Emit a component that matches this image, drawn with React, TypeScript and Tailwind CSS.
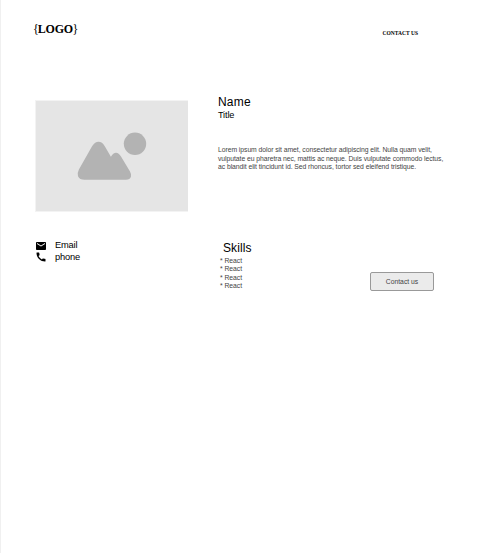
import React from 'react';

const skills = ['React', 'React', 'React', 'React'];

function Placeholder() {
  return (
    <svg className="block h-[112px] w-[153px]" viewBox="35 100 153 112">
      <rect x="35" y="100" width="153" height="112" fill="#f3f3f3" />
      <rect x="36" y="101" width="152" height="110" fill="#e5e5e5" />
      <path
        d="M78.9 169.5L92.2 146.1Q95 141.8 98.5 141.8Q102.2 141.8 104.8 146.2L110.9 156.8Q113.2 152.8 116 152.8Q118.8 152.8 121 156.6L130 171.6Q131.6 174.6 131 176.6Q130 179.8 126 179.8H84.5Q79.5 179.8 78 176.2Q77 173.2 78.9 169.5Z"
        fill="#b3b3b3"
      />
      <circle cx="135" cy="143.8" r="11.2" fill="#b3b3b3" />
    </svg>
  );
}

function MailIcon() {
  return (
    <svg className="block size-[12px]" viewBox="0 0 24 24">
      <path d="M20 4H4c-1.1 0-2 .9-2 2v12c0 1.1.9 2 2 2h16c1.1 0 2-.9 2-2V6c0-1.1-.9-2-2-2zm0 4l-8 5-8-5V6l8 5 8-5v2z" />
    </svg>
  );
}

function PhoneIcon() {
  return (
    <svg className="block size-[12px]" viewBox="0 0 24 24">
      <path d="M20.01 15.38c-1.23 0-2.42-.2-3.53-.56a.977.977 0 0 0-1.01.24l-1.57 1.97c-2.83-1.35-5.48-3.9-6.89-6.83l1.95-1.66c.27-.28.35-.67.24-1.02-.37-1.11-.56-2.3-.56-3.53 0-.54-.45-.99-.99-.99H4.19C3.65 3 3 3.24 3 3.99 3 13.28 10.73 21 20.01 21c.71 0 .99-.63.99-1.18v-3.45c0-.54-.45-.99-.99-.99z" />
    </svg>
  );
}

export default function App() {
  return (
    <div className="h-[553px] w-[478px] border-l border-[#f0f0f0] bg-white font-['Liberation_Sans',Arial,sans-serif] text-black">
      <header className="flex h-[100px] justify-between pl-[32px] pr-[60px] pt-[22px] font-['Liberation_Serif',serif] font-bold">
        <div className="whitespace-nowrap text-[12px] leading-[14px] tracking-[-0.2px]">
          <span className="font-normal">{'{'}</span>
          <span className="-ml-[0.8px]">LOGO</span>
          <span className="-ml-[0.4px] font-normal">{'}'}</span>
        </div>
        <nav className="whitespace-nowrap pt-[7px] text-[5.5px] leading-[8px]">CONTACT US</nav>
      </header>

      <section className="flex h-[139px] gap-[30px] pl-[34px]">
        <Placeholder />
        <div className="whitespace-nowrap">
          <h1 className="-mt-[6px] h-[16px] text-[12px] leading-[16px] tracking-[0.2px]">Name</h1>
          <h2 className="text-[9.2px] leading-[10px] tracking-[-0.15px]">Title</h2>
          <p className="mt-[26px] text-[6.8px] leading-[8.5px] tracking-[-0.05px] text-[#444]">
            Lorem ipsum dolor sit amet, consectetur adipiscing elit. Nulla quam velit,
            <br />
            vulputate eu pharetra nec, mattis ac neque. Duis vulputate commodo lectus,
            <br />
            ac blandit elit tincidunt id. Sed rhoncus, tortor sed eleifend tristique.
          </p>
        </div>
      </section>

      <section className="flex pl-[34px]">
        <div className="w-[185px] text-[9.3px] leading-[12px] tracking-[-0.2px]">
          <div className="flex h-[12px] gap-[8px]">
            <div className="pt-[1px]">
              <MailIcon />
            </div>
            <span>Email</span>
          </div>
          <div className="flex h-[12px] gap-[8px]">
            <PhoneIcon />
            <span>phone</span>
          </div>
        </div>
        <div className="w-[150px]">
          <h2 className="h-[18px] pl-[3px] pt-[1px] text-[12px] leading-[17px] tracking-[0.1px]">Skills</h2>
          <ul className="text-[6.8px] leading-[8.3px] tracking-[-0.045px] text-[#444]">
            {skills.map((skill, i) => (
              <li key={i}>* {skill}</li>
            ))}
          </ul>
        </div>
        <button className="mt-[33px] h-[19px] w-[64px] rounded-[2px] border border-[#999] bg-[#ebebeb] text-[6.8px] leading-[17px] text-[#444]">
          Contact us
        </button>
      </section>
    </div>
  );
}
